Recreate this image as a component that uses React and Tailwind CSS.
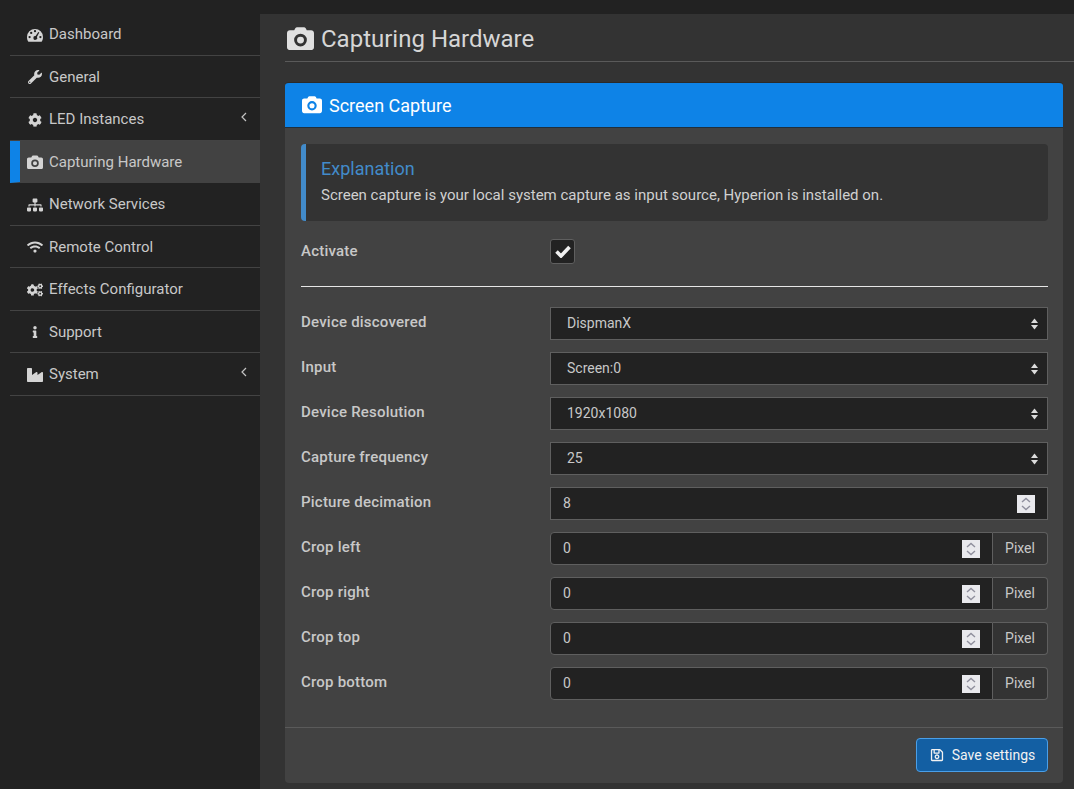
import React from 'react';
import { FaWrench, FaCog, FaSitemap, FaWifi, FaCogs, FaInfo, FaIndustry, FaRegSave } from 'react-icons/fa';

const CameraIcon = ({ size = 16, className = '' }) => (
  <svg width={size} height={(size * 24) / 28} viewBox="0 0 28 24" fill="currentColor" className={className}>
    <path
      fillRule="evenodd"
      d="M3 3.5 H7.5 L8.6 1.4 C9 .6 9.6 .2 10.4 .2 H17.6 C18.4 .2 19 .6 19.4 1.4 L20.5 3.5 H25 C26.7 3.5 28 4.8 28 6.5 V21 C28 22.7 26.7 24 25 24 H3 C1.3 24 0 22.7 0 21 V6.5 C0 4.8 1.3 3.5 3 3.5 Z M14 7 A6.6 6.6 0 1 0 14 20.2 A6.6 6.6 0 1 0 14 7 Z M14 10 A3.6 3.6 0 1 1 14 17.2 A3.6 3.6 0 1 1 14 10 Z"
    />
  </svg>
);

const GaugeIcon = ({ size = 16 }) => (
  <svg width={size} height={(size * 14) / 16} viewBox="0 0 16 14" fill="currentColor">
    <path
      fillRule="evenodd"
      d="M0 9 A8 8 0 0 1 16 9 C16 10.8 15.6 12.1 14.8 13.4 C14.6 13.7 14.3 13.8 14 13.8 H2 C1.7 13.8 1.4 13.7 1.2 13.4 C.4 12.1 0 10.8 0 9 Z M2.6 7.9 A1.15 1.15 0 1 0 2.6 10.2 A1.15 1.15 0 1 0 2.6 7.9 Z M4.2 3.8 A1.15 1.15 0 1 0 4.2 6.1 A1.15 1.15 0 1 0 4.2 3.8 Z M8 2 A1.15 1.15 0 1 0 8 4.3 A1.15 1.15 0 1 0 8 2 Z M13.4 7.9 A1.15 1.15 0 1 0 13.4 10.2 A1.15 1.15 0 1 0 13.4 7.9 Z M11.3 3.9 L8.6 8.1 A1.9 1.9 0 1 0 9.9 9 L12.3 4.5 Z"
    />
  </svg>
);

const AngleIcon = () => (
  <svg width="6" height="10" viewBox="0 0 6 10" fill="none" stroke="#c4c4c4" strokeWidth="1.2" className="mb-[5px]">
    <path d="M5 1 L1 5 L5 9" />
  </svg>
);

const navItems = [
  { label: 'Dashboard', icon: <GaugeIcon size={16} /> },
  { label: 'General', icon: <FaWrench size={14} /> },
  { label: 'LED Instances', icon: <FaCog size={14} />, arrow: true },
  { label: 'Capturing Hardware', icon: <CameraIcon size={17} />, active: true },
  { label: 'Network Services', icon: <FaSitemap size={16} /> },
  { label: 'Remote Control', icon: <FaWifi size={16} /> },
  { label: 'Effects Configurator', icon: <FaCogs size={16} /> },
  { label: 'Support', icon: <FaInfo size={12} /> },
  { label: 'System', icon: <FaIndustry size={16} />, arrow: true },
];

const selects = [
  { label: 'Device discovered', value: 'DispmanX' },
  { label: 'Input', value: 'Screen:0' },
  { label: 'Device Resolution', value: '1920x1080' },
  { label: 'Capture frequency', value: '25' },
];

const crops = ['Crop left', 'Crop right', 'Crop top', 'Crop bottom'];

const SelectArrows = () => (
  <svg width="7" height="12" viewBox="0 0 7 12" className="fill-[#dcdcdc]">
    <path d="M3.5 0.5 L7 5 H0 Z" />
    <path d="M0 7 H7 L3.5 11.5 Z" />
  </svg>
);

const Spinner = () => (
  <span className="flex h-[18px] w-[18px] items-center justify-center bg-[#e9e9ed]">
    <svg width="10" height="14" viewBox="0 0 10 14" fill="none" stroke="#8f8f9d" strokeWidth="1.4">
      <path d="M1 5 L5 1.5 L9 5" />
      <path d="M1 9 L5 12.5 L9 9" />
    </svg>
  </span>
);

const Row = ({ label, children }) => (
  <div className="mb-[12px] flex h-[33px]">
    <label className="w-[249px] shrink-0 pt-[5px] text-[15px] font-medium leading-[20px] tracking-[0.22px] text-[#c8c8c8]">{label}</label>
    {children}
  </div>
);

const App = () => {
  return (
    <div className="flex h-[789px] w-[1074px] overflow-hidden bg-[#222222] pt-[14px] font-['Roboto',sans-serif] text-[#c8c8c8]">
      {/* Sidebar */}
      <aside className="ml-[10px] mt-[-1px] w-[250px] shrink-0">
        {navItems.map((item) => (
          <div
            key={item.label}
            className={`flex h-[42.5px] items-center border-b pl-[17px] pr-[13px] pt-[1.5px] text-[15px] ${
              item.active
                ? 'border-l-[10px] border-b-transparent border-l-[#0e83e7] bg-[#424242] !pl-[7px]'
                : 'border-[#434343]'
            }`}
          >
            <span className="mr-[6px] flex w-[16px] justify-center text-[#d4d4d4]">{item.icon}</span>
            <span className="flex-1">{item.label}</span>
            {item.arrow && <AngleIcon />}
          </div>
        ))}
      </aside>

      {/* Content */}
      <main className="flex min-w-0 flex-1 flex-col bg-[#333333] pl-[25px]">
        <div className="flex h-[48px] items-center gap-[7px] border-b border-[#5a5a5a] pt-[2px]">
          <CameraIcon size={27} className="ml-[2px] text-[#e0e0e0]" />
          <h1 className="text-[24px] leading-none text-[#d6d6d6]">Capturing Hardware</h1>
        </div>

        <section className="mb-[6px] mr-[11px] mt-[20px] flex flex-1 flex-col overflow-hidden rounded-[4px] border-t border-[#2a2a2a] bg-[#424242]">
          <div className="flex h-[45px] shrink-0 items-center gap-[7px] border-b border-[#1f2f3d] bg-[#0e83e7] pl-[17px] text-[18px] text-white">
            <CameraIcon size={20} />
            <span>Screen Capture</span>
          </div>

          <div className="flex-1 pl-[16px] pr-[15px] pt-[16px]">
            <div className="h-[77px] rounded-[4px] border-l-[5px] border-[#428bca] bg-[#333333] pl-[15px] pt-[14px]">
              <h4 className="text-[18px] leading-[22px] text-[#428bca]">Explanation</h4>
              <p className="mt-[5px] text-[15px] leading-[20px] text-[#d0d0d0]">
                Screen capture is your local system capture as input source, Hyperion is installed on.
              </p>
            </div>

            <div className="mt-[18px] flex h-[27px]">
              <label className="w-[249px] shrink-0 pt-[2px] text-[15px] font-medium leading-[20px] tracking-[0.22px] text-[#c8c8c8]">Activate</label>
              <span className="flex h-[25px] w-[25px] items-center justify-center rounded-[3px] border border-[#5f5f5f] bg-[#222222]">
                <svg width="16" height="13" viewBox="0 0 16 13" fill="none" stroke="#f0f0f0" strokeWidth="3.6">
                  <path d="M1.5 6.5 L6 11 L14.5 2" />
                </svg>
              </span>
            </div>

            <hr className="mb-[20px] mt-[20px] border-t border-[#e6e6e6]" />

            {selects.map((s) => (
              <Row key={s.label} label={s.label}>
                <div className="flex h-[33px] flex-1 items-center justify-between border border-[#5f5f5f] bg-[#222222] pl-[16px] pr-[9px] text-[14px]">
                  <span>{s.value}</span>
                  <SelectArrows />
                </div>
              </Row>
            ))}

            <Row label="Picture decimation">
              <div className="flex h-[33px] flex-1 items-center justify-between border border-[#5f5f5f] bg-[#222222] pl-[12px] pr-[12px] text-[14px]">
                <span>8</span>
                <Spinner />
              </div>
            </Row>

            {crops.map((label) => (
              <Row key={label} label={label}>
                <div className="flex h-[33px] flex-1">
                  <div className="flex flex-1 items-center justify-between rounded-l-[4px] border border-[#5f5f5f] bg-[#222222] pl-[12px] pr-[12px] text-[14px]">
                    <span>0</span>
                    <Spinner />
                  </div>
                  <span className="flex w-[55px] items-center justify-center rounded-r-[4px] border border-l-0 border-[#5f5f5f] bg-[#333333] text-[14px]">
                    Pixel
                  </span>
                </div>
              </Row>
            ))}
          </div>

          <div className="flex h-[56px] shrink-0 items-center justify-end border-t border-[#5a5a5a] pb-[1px] pr-[15px]">
            <button className="flex h-[34px] w-[132px] items-center justify-center gap-[8px] rounded-[4px] border border-[#4a9fe8] bg-[#135fa3] pl-[1px] text-[14px] text-[#f2f2f2]">
              <FaRegSave size={14} />
              Save settings
            </button>
          </div>
        </section>
      </main>
    </div>
  );
};

export default App;
